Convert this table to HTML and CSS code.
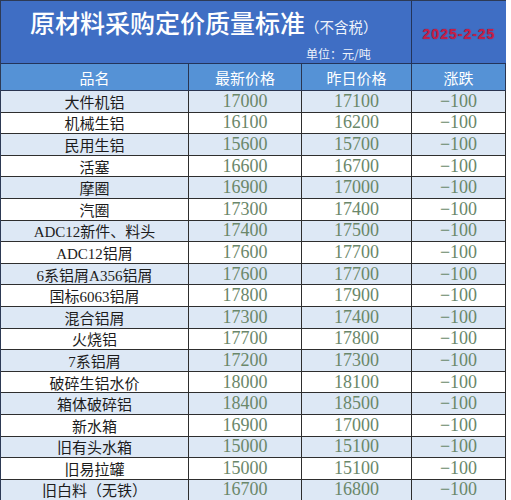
FILE: index.html
```html
<!DOCTYPE html>
<html lang="zh-CN">
<head>
<meta charset="utf-8">
<title>原材料采购定价质量标准</title>
<link rel="stylesheet" href="styles.css">
</head>
<body>
<div class="sheet">
  <div class="title-row">
    <div class="title-cell">
      <div class="title-line">
        <span class="title">原材料采购定价质量标准</span>
        <span class="paren">（不含税）</span>
      </div>
      <div class="unit">单位：元/吨</div>
    </div>
    <div class="date-cell"><span class="date">2025-2-25</span></div>
  </div>
  <div class="row head">
    <div class="c">品名</div><div class="c">最新价格</div><div class="c">昨日价格</div><div class="c">涨跌</div>
  </div>
  <div class="row alt"><div class="c name">大件机铝</div><div class="c num">17000</div><div class="c num">17100</div><div class="c num">−100</div></div>
  <div class="row"><div class="c name">机械生铝</div><div class="c num">16100</div><div class="c num">16200</div><div class="c num">−100</div></div>
  <div class="row alt"><div class="c name">民用生铝</div><div class="c num">15600</div><div class="c num">15700</div><div class="c num">−100</div></div>
  <div class="row"><div class="c name">活塞</div><div class="c num">16600</div><div class="c num">16700</div><div class="c num">−100</div></div>
  <div class="row alt"><div class="c name">摩圈</div><div class="c num">16900</div><div class="c num">17000</div><div class="c num">−100</div></div>
  <div class="row"><div class="c name">汽圈</div><div class="c num">17300</div><div class="c num">17400</div><div class="c num">−100</div></div>
  <div class="row alt"><div class="c name">ADC12新件、料头</div><div class="c num">17400</div><div class="c num">17500</div><div class="c num">−100</div></div>
  <div class="row"><div class="c name">ADC12铝屑</div><div class="c num">17600</div><div class="c num">17700</div><div class="c num">−100</div></div>
  <div class="row alt"><div class="c name">6系铝屑A356铝屑</div><div class="c num">17600</div><div class="c num">17700</div><div class="c num">−100</div></div>
  <div class="row"><div class="c name">国标6063铝屑</div><div class="c num">17800</div><div class="c num">17900</div><div class="c num">−100</div></div>
  <div class="row alt"><div class="c name">混合铝屑</div><div class="c num">17300</div><div class="c num">17400</div><div class="c num">−100</div></div>
  <div class="row"><div class="c name">火烧铝</div><div class="c num">17700</div><div class="c num">17800</div><div class="c num">−100</div></div>
  <div class="row alt"><div class="c name">7系铝屑</div><div class="c num">17200</div><div class="c num">17300</div><div class="c num">−100</div></div>
  <div class="row"><div class="c name">破碎生铝水价</div><div class="c num">18000</div><div class="c num">18100</div><div class="c num">−100</div></div>
  <div class="row alt"><div class="c name">箱体破碎铝</div><div class="c num">18400</div><div class="c num">18500</div><div class="c num">−100</div></div>
  <div class="row"><div class="c name">新水箱</div><div class="c num">16900</div><div class="c num">17000</div><div class="c num">−100</div></div>
  <div class="row alt"><div class="c name">旧有头水箱</div><div class="c num">15000</div><div class="c num">15100</div><div class="c num">−100</div></div>
  <div class="row"><div class="c name">旧易拉罐</div><div class="c num">15000</div><div class="c num">15100</div><div class="c num">−100</div></div>
  <div class="row alt"><div class="c name">旧白料（无铁）</div><div class="c num">16700</div><div class="c num">16800</div><div class="c num">−100</div></div>
</div>
</body>
</html>
```

FILE: styles.css
```css
html, body {
  margin: 0;
  padding: 0;
  background: #ffffff;
}

.sheet {
  width: 506px;
  box-sizing: border-box;
  border-left: 1px solid #2d3a55;
  border-top: 1px solid #2d3a55;
  font-family: "Liberation Serif", "Noto Sans CJK SC", serif;
}

.title-row {
  display: grid;
  grid-template-columns: 411px 94px;
  height: 62px;
  background: #3f6ec4;
  border-bottom: 1px solid #23345a;
}

.title-cell {
  border-right: 1px solid #23345a;
  padding: 6px 0 0 29px;
  box-sizing: border-box;
  font-family: "Noto Sans CJK SC", sans-serif;
  color: #ffffff;
}

.title-line {
  display: flex;
  align-items: baseline;
}

.title {
  font-size: 25px;
  line-height: 30px;
  font-weight: 500;
}

.paren {
  font-size: 14.5px;
  line-height: 18px;
  color: #eef3fb;
  font-feature-settings: "fwid";
}

.unit {
  margin: 9px 0 0 276px;
  font-size: 12px;
  line-height: 16px;
  color: #eef3fb;
}

.date-cell {
  display: flex;
  align-items: center;
  justify-content: center;
  padding-top: 4px;
}

.date {
  font-family: "Liberation Sans", sans-serif;
  font-weight: bold;
  font-size: 14px;
  letter-spacing: 1px;
  color: #c41f4a;
  text-shadow: 0 0 1px #6a1030;
}

.row {
  display: grid;
  grid-template-columns: 188px 113px 110px 94px;
  height: 21.6px;
  box-sizing: border-box;
  border-bottom: 1px solid #2e2e2e;
  background: #ffffff;
}

.row.alt {
  background: #dde8f5;
}

.row.head {
  height: 27px;
  background: #5592d6;
  border-bottom: 1px solid #2a3550;
}

.c {
  display: flex;
  align-items: center;
  justify-content: center;
  border-right: 1px solid #2e2e2e;
  white-space: nowrap;
  overflow: hidden;
}

.head .c {
  font-family: "Noto Sans CJK SC", sans-serif;
  font-size: 15px;
  color: #ffffff;
  border-right-color: #2a3550;
  padding-top: 1px;
}

.name {
  font-family: "Liberation Serif", "Noto Sans CJK SC", serif;
  font-size: 15px;
  color: #1c1c1c;
}

.num {
  font-family: "Liberation Serif", serif;
  font-size: 18px;
  color: #6a876a;
}
```
